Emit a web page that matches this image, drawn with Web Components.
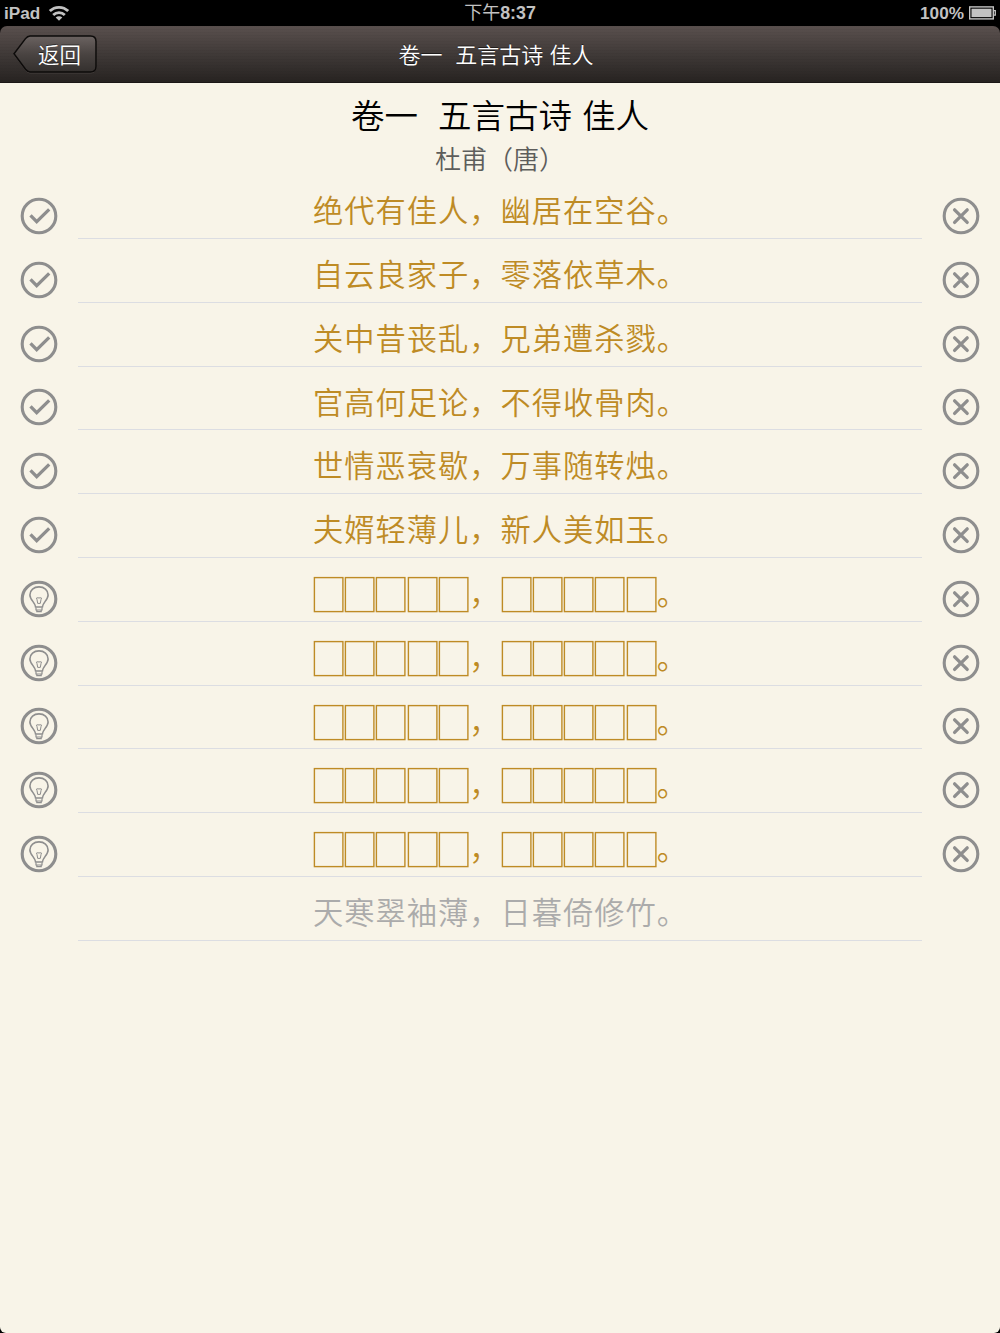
<!DOCTYPE html>
<html lang="zh-CN">
<head>
<meta charset="utf-8">
<title>卷一 五言古诗 佳人</title>
<style>
  html, body { margin: 0; height: 100%; background: #000; }
  body {
    font-family: "Noto Sans CJK SC", "Liberation Sans", sans-serif;
    font-weight: 350;
    text-spacing-trim: space-all;
    overflow: hidden;
  }
</style>
</head>
<body>
<poem-app></poem-app>

<script>
customElements.define('status-bar', class extends HTMLElement {
    constructor() {
        super()
        let s = this.attachShadow({mode: 'open'})
        s.innerHTML = `
<style>
  :host {
    display: grid;
    grid-template-columns: 1fr auto 1fr;
    align-items: center;
    height: 26px;
    padding: 0 4px 0 4px;
    box-sizing: border-box;
    color: #c2c2c2;
    font: bold 18px/26px "Liberation Sans", "Noto Sans CJK SC", sans-serif;
  }
  div { display: flex; align-items: center; height: 26px; }
  .left { gap: 8px; font-size: 17.2px; }
  .right { justify-content: flex-end; gap: 5px; font-size: 17.2px; }
  .time { font-size: 17.8px; }
  .time span { font-weight: 400; font-size: 18px; }
  svg { display: block; }
</style>
<div class="left">
  <span>iPad</span>
  <svg width="22" height="17" viewBox="0 0 22 17" fill="none" stroke="#c2c2c2" stroke-width="2.8">
    <path d="M1.8 6.1A13 13 0 0 1 20.2 6.1M5.2 9.9A8.3 8.3 0 0 1 16.8 9.9"/>
    <path d="M11 15.7L7.7 12.5A4.7 4.7 0 0 1 14.3 12.5Z" fill="#c2c2c2" stroke="none"/>
  </svg>
</div>
<div class="time"><span>下午</span>8:37</div>
<div class="right">
  <span>100%</span>
  <svg width="27" height="14" viewBox="0 0 27 14">
    <rect x=".7" y=".9" width="23.6" height="12" fill="none" stroke="#c2c2c2" stroke-width="1.4"/>
    <rect x="2.5" y="2.7" width="20" height="8.4" fill="#c2c2c2"/>
    <path d="M24.8 4.6h1.5v4.6h-1.5" fill="none" stroke="#c2c2c2" stroke-width="1.3"/>
  </svg>
</div>
`
    }
})

customElements.define('back-button', class extends HTMLElement {
    constructor() {
        super()
        let s = this.attachShadow({mode: 'open'})
        s.innerHTML = `
<style>
  :host { display: grid; width: 86px; height: 40px; cursor: pointer; }
  svg, span { grid-area: 1 / 1; }
  span {
    padding-left: 26px;
    font-size: 21.5px;
    line-height: 39px;
    color: #fff;
    text-shadow: 0 -1px 0 rgba(0, 0, 0, .5);
  }
</style>
<svg width="86" height="40" viewBox="0 0 86 40">
  <defs>
    <linearGradient id="g" x1="0" y1="0" x2="0" y2="1">
      <stop offset="0" stop-color="#6b6361"/>
      <stop offset=".5" stop-color="#4a4442"/>
      <stop offset="1" stop-color="#34302e"/>
    </linearGradient>
  </defs>
  <path d="M18 2.9H78.5Q84 2.9 84 8.4V33.4Q84 38.9 78.5 38.9H18Q15.5 38.7 13.5 36.2L2 20.7L13.5 5.6Q15.5 3.1 18 2.9Z" fill="none" stroke="#6a6260" stroke-opacity=".5"/>
  <path d="M18 1.9H78.5Q84 1.9 84 7.4V32.4Q84 37.9 78.5 37.9H18Q15.5 37.7 13.5 35.2L2 19.7L13.5 4.6Q15.5 2.1 18 1.9Z" fill="url(#g)" stroke="#0d0b0a" stroke-width="1.5"/>
</svg>
<span><slot></slot></span>
`
    }
})

customElements.define('nav-bar', class extends HTMLElement {
    constructor() {
        super()
        let s = this.attachShadow({mode: 'open'})
        s.innerHTML = `
<style>
  :host {
    display: grid;
    grid-template-columns: 1fr auto 1fr;
    align-items: center;
    height: 57px;
    padding: 0 20px 0 12px;
    box-sizing: border-box;
    border-radius: 7px 7px 0 0;
    border-bottom: 1.5px solid #1b1716;
    background:
      repeating-linear-gradient(rgba(0, 0, 0, .03) 0 1px, transparent 1px 3px),
      linear-gradient(#5a504e, #403a38 50%, #272321);
    color: #fff;
  }
  .title {
    font-size: 22px;
    line-height: 52px;
    padding-bottom: 2px;
    white-space: pre;
    word-spacing: 1.4px;
    text-shadow: 0 -1px 0 rgba(0, 0, 0, .5);
  }
</style>
<slot name="left"></slot>
<div class="title"><slot></slot></div>
`
    }
})

customElements.define('round-icon', class extends HTMLElement {
    static shapes = {
        check: '<path d="M11.5 19.3L17.7 25.6L30.2 13.4" stroke-width="3.3"/>',
        cross: '<path d="M13.6 13.8L26.2 26.4M26.2 13.8L13.6 26.4" stroke-width="3.3" stroke-linecap="round"/>',
        bulb: `
<path d="M16.6 28C16.3 23.6 10.9 20.7 10.9 15.9C10.9 10.9 14.9 7.9 20 7.9S29.1 10.9 29.1 15.9C29.1 20.7 23.7 23.6 23.4 28Z" stroke-width="1.6"/>
<path d="M18.7 24.4L18 20.6Q16.6 18.4 18.8 18.7Q20 19.4 21.2 18.7Q23.4 18.4 22 20.6L21.3 24.4Z" stroke-width="1"/>
<path d="M17 28.5V31H23V28.5M17.8 31V32.6H22.2V31" stroke-width="1.2"/>`
    }

    constructor() {
        super()
        let s = this.attachShadow({mode: 'open'})
        s.innerHTML = `
<style>
  :host { display: block; width: 40px; height: 40px; cursor: pointer; }
  svg { display: block; }
</style>
<svg width="40" height="40" viewBox="0 0 40 40" fill="none" stroke="#8e8e8e">
  <circle cx="20" cy="20" r="16.8" stroke-width="3.1"/>
  ${this.constructor.shapes[this.getAttribute('shape')]}
</svg>
`
    }
})

// one hidden character of a verse
customElements.define('blank-char', class extends HTMLElement {
    constructor() {
        super()
        let s = this.attachShadow({mode: 'open'})
        s.innerHTML = `
<style>
  :host { display: inline-flex; justify-content: center; width: 31.25px; height: 35px; vertical-align: -7px; }
  svg { display: block; overflow: visible; }
</style>
<svg width="31.25" height="35"><rect x="1.4" y=".6" width="28.5" height="34" fill="none" stroke="currentColor" stroke-width="1.4"/></svg>
`
    }
})

customElements.define('verse-row', class extends HTMLElement {
    constructor() {
        super()
        let state = this.getAttribute('state')
        let left  = {done: 'check', hidden: 'bulb'}[state]
        let icon  = shape => shape ? `<round-icon shape="${shape}"></round-icon>` : ''

        let s = this.attachShadow({mode: 'open'})
        s.innerHTML = `
<style>
  :host {
    display: grid;
    grid-template-columns: 78px 1fr 78px;
    height: 63.8px;
    color: #be8b25;
  }
  :host([state="next"]) { color: #ababab; }
  .side { display: flex; justify-content: center; padding-top: 20.7px; }
  .verse {
    box-sizing: border-box;
    height: 63.8px;
    padding-top: 3px;
    border-bottom: 1px solid #dcdde2;
    font-size: 30.25px;
    letter-spacing: 1px;
    text-indent: 1px;
    line-height: 62px;
    text-align: center;
    white-space: nowrap;
  }
</style>
<div class="side">${icon(left)}</div>
<div class="verse"><slot></slot></div>
<div class="side">${icon(left && 'cross')}</div>
`
    }
})

customElements.define('poem-head', class extends HTMLElement {
    constructor() {
        super()
        let s = this.attachShadow({mode: 'open'})
        s.innerHTML = `
<style>
  :host { display: block; height: 92.3px; text-align: center; }
  .title {
    padding-top: 8px;
    font-size: 33.5px;
    line-height: 46px;
    color: #000;
    white-space: pre;
    word-spacing: 2.6px;
  }
  .author { font-size: 26.04px; line-height: 42px; color: #5d5d5b; }
</style>
<div class="title"><slot></slot></div>
<div class="author"><slot name="author"></slot></div>
`
    }
})

customElements.define('poem-app', class extends HTMLElement {
    static title = '卷一  五言古诗 佳人'
    static done = [
        '绝代有佳人，幽居在空谷。',
        '自云良家子，零落依草木。',
        '关中昔丧乱，兄弟遭杀戮。',
        '官高何足论，不得收骨肉。',
        '世情恶衰歇，万事随转烛。',
        '夫婿轻薄儿，新人美如玉。'
    ]
    static hidden = 5
    static next = '天寒翠袖薄，日暮倚修竹。'

    constructor() {
        super()
        let {title, done, hidden, next} = this.constructor
        let blanks = '<blank-char></blank-char>'.repeat(5)
        let row = (state, text) => `<verse-row state="${state}">${text}</verse-row>`

        let s = this.attachShadow({mode: 'open'})
        s.innerHTML = `
<style>
  :host { display: flex; flex-direction: column; height: 1333px; background: #000; }
  main { flex: 1; background: #f8f4e8; border-radius: 0 0 6px 6px; }
</style>
<status-bar></status-bar>
<nav-bar><back-button slot="left">返回</back-button>${title}</nav-bar>
<main>
  <poem-head>${title}<span slot="author">杜甫（唐）</span></poem-head>
  ${done.map(text => row('done', text)).join('')}
  ${row('hidden', `${blanks}，${blanks}。`).repeat(hidden)}
  ${row('next', next)}
</main>
`
    }
})
</script>
</body>
</html>
